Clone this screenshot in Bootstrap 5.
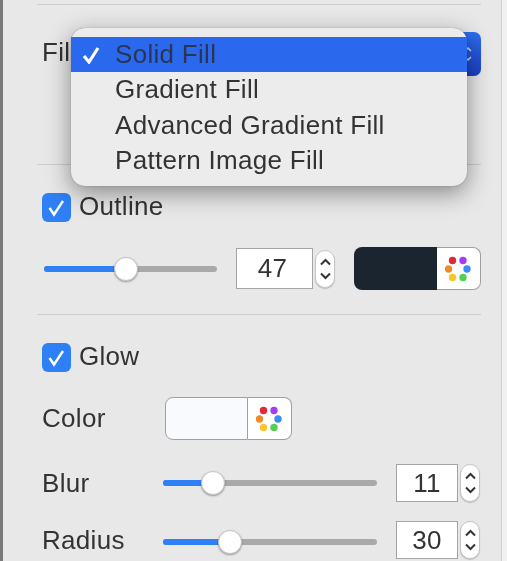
<!DOCTYPE html>
<html lang="en">
<head>
<meta charset="UTF-8">
<meta name="viewport" content="width=device-width, initial-scale=1.0">
<title>Fill and outline</title>
<link href="https://cdn.jsdelivr.net/npm/bootstrap@5.3.3/dist/css/bootstrap.min.css" rel="stylesheet">
<style>
html, body { height: 100%; overflow: hidden; background: #f1f1f1; }
body { font-family: "Liberation Sans", Arial, sans-serif; font-size: 26px; letter-spacing: .3px; color: #333; }
.panel-box { position: relative; width: 502px; height: 561px; padding: 4px 20px 0 37px; background: #e8e8e8; border-left: 3px solid #7a7a7a; border-right: 1px solid #cfcfcf; filter: blur(.6px); }
.rule { height: 1px; margin: 0 0 0 -3px; background: #cdcdcd; }
.fill-row { height: 44px; margin-top: 27px; margin-bottom: 88px; margin-left: 2px; }
.fill-label { position: relative; top: -2px; }
.fill-btn { display: flex; flex-direction: column; align-items: flex-end; justify-content: center; gap: 4px; height: 44px; flex: 1; padding: 0 9px 0 0; border: 0; border-radius: 7px; background: linear-gradient(#2f6ef0, #1b3fc4); }
.check-row { height: 29px; margin-top: 28px; margin-left: 2px; }
.check-row .form-check-input { width: 29px; height: 29px; margin: 0; border: 0; border-radius: 6px; background-color: #2f7ff6; }
.check-row .form-check-input:checked[type=checkbox] { --bs-form-check-bg-image: url("data:image/svg+xml,%3Csvg xmlns='http://www.w3.org/2000/svg' viewBox='0 0 29 29'%3E%3Cpath d='M7.500 15l4.500 6.500L21 8' fill='none' stroke='%23fff' stroke-width='2.400'/%3E%3C/svg%3E"); }
.check-row label { margin-left: 8px; line-height: 29px; position: relative; top: -1px; }
.slider-row { height: 43px; margin-top: 25px; margin-left: 4px; }
.color-row { margin-left: 0; }
.blur-row { height: 38px; margin-top: 24px; }
.radius-row { height: 38px; margin-top: 19px; }
.track { position: relative; height: 6px; border-radius: 3px; background: #a9a9a9; }
.track-fill { height: 6px; border-radius: 3px 0 0 3px; background: #2f7ff6; }
.knob { position: absolute; top: -9px; width: 24px; height: 24px; margin-left: -12px; border-radius: 50%; background: #fff; border: 1px solid #c4c4c4; box-shadow: 0 1px 2px rgba(0,0,0,.35); }
.track-a { width: 173px; margin-right: 19px; }
.track-b { width: 214px; margin-right: 19px; }
.num { width: 77px; height: 41px; padding: 0 4px 0 0; border: 1px solid #a5a5a5; border-radius: 0; text-align: center; font-size: 26px; letter-spacing: .3px; color: #333; background: #fff; }
.num-sm { width: 62px; height: 38px; padding: 0; }
.stepper { display: flex; flex-direction: column; justify-content: center; align-items: center; gap: 6px; width: 20px; height: 38px; margin-left: 2px; border-radius: 10px; background: #fff; border: 1px solid #c6c6c6; box-shadow: 0 1px 1px rgba(0,0,0,.2); }
.well { display: flex; width: 127px; height: 43px; }
.swatch { width: 83px; flex: none; border-radius: 8px 0 0 8px; }
.swatch-dark { background: #1a2530; }
.swatch-light { background: #f9fafe; border: 1px solid #a0a0a0; }
.well-icon { flex: 1; display: flex; align-items: center; justify-content: center; padding-right: 2px; background: #fff; border: 1px solid #a0a0a0; border-left: 0; border-radius: 0 8px 8px 0; }
.side-label { width: 123px; flex: none; margin-left: 2px; }
.side-label-sm { width: 121px; }
.menu-over { display: block; top: 28px; left: 68px; width: 396px; min-width: 0; padding: 9px 0 7px; border: 0; border-radius: 14px; background: #ececec; font-size: 26px; box-shadow: 0 7px 24px rgba(0,0,0,.42), 0 0 1px rgba(0,0,0,.5); }
.menu-over .dropdown-item { position: relative; height: 35.500px; padding: 0 0 0 44px; line-height: 35px; color: #333; }
.menu-over .dropdown-item.active { height: 35px; background: #2a69ee; color: #2b3552; }
.tick { position: absolute; left: 11px; top: 9px; }
</style>
</head>
<body>
<div class="panel-box">
  <div class="rule"></div>

  <div class="fill-row d-flex align-items-center">
    <span class="fill-label me-2">Fill</span>
    <button type="button" class="btn fill-btn" aria-label="Fill type">
      <svg width="8" height="6" viewBox="0 0 8 6"><path d="M1 5 4 2l3 3" fill="none" stroke="#cfdcff" stroke-width="1.500"/></svg>
      <svg width="8" height="6" viewBox="0 0 8 6"><path d="M1 1l3 3 3-3" fill="none" stroke="#cfdcff" stroke-width="1.500"/></svg>
    </button>
  </div>
  <div class="rule"></div>

  <div class="check-row d-flex align-items-center">
    <input class="form-check-input" type="checkbox" id="outline" checked>
    <label for="outline">Outline</label>
  </div>
  <div class="slider-row d-flex align-items-center">
    <div class="track track-a">
      <div class="track-fill" style="width:47.500%"></div>
      <div class="knob" style="left:47.500%"></div>
    </div>
    <input class="form-control num" value="47">
    <div class="stepper">
      <svg width="13" height="8" viewBox="0 0 13 8"><path d="M2 6.500 6.500 2 11 6.500" fill="none" stroke="#333" stroke-width="2"/></svg>
      <svg width="13" height="8" viewBox="0 0 13 8"><path d="M2 1.500 6.500 6 11 1.500" fill="none" stroke="#333" stroke-width="2"/></svg>
    </div>
    <div class="well ms-auto">
      <div class="swatch swatch-dark"></div>
      <div class="well-icon">
        <svg width="26" height="26" viewBox="0 0 26 26"><circle cx="7.500" cy="4.500" r="3.700" fill="#e0283a"/><circle cx="18" cy="4.500" r="3.700" fill="#a43df0"/><circle cx="22" cy="13" r="3.700" fill="#3a8cf5"/><circle cx="18" cy="21.500" r="3.700" fill="#55cf50"/><circle cx="7.500" cy="21.500" r="3.700" fill="#fcc52e"/><circle cx="3.500" cy="13" r="3.700" fill="#f08a28"/></svg>
      </div>
    </div>
  </div>
  <div class="rule mt-4"></div>

  <div class="check-row d-flex align-items-center">
    <input class="form-check-input" type="checkbox" id="glow" checked>
    <label for="glow">Glow</label>
  </div>
  <div class="d-flex align-items-center slider-row color-row">
    <span class="side-label">Color</span>
    <div class="well">
      <div class="swatch swatch-light"></div>
      <div class="well-icon">
        <svg width="26" height="26" viewBox="0 0 26 26"><circle cx="7.500" cy="4.500" r="3.700" fill="#e0283a"/><circle cx="18" cy="4.500" r="3.700" fill="#a43df0"/><circle cx="22" cy="13" r="3.700" fill="#3a8cf5"/><circle cx="18" cy="21.500" r="3.700" fill="#55cf50"/><circle cx="7.500" cy="21.500" r="3.700" fill="#fcc52e"/><circle cx="3.500" cy="13" r="3.700" fill="#f08a28"/></svg>
      </div>
    </div>
  </div>
  <div class="d-flex align-items-center blur-row">
    <span class="side-label side-label-sm">Blur</span>
    <div class="track track-b">
      <div class="track-fill" style="width:23.500%"></div>
      <div class="knob" style="left:23.500%"></div>
    </div>
    <input class="form-control num num-sm" value="11">
    <div class="stepper">
      <svg width="13" height="8" viewBox="0 0 13 8"><path d="M2 6.500 6.500 2 11 6.500" fill="none" stroke="#333" stroke-width="2"/></svg>
      <svg width="13" height="8" viewBox="0 0 13 8"><path d="M2 1.500 6.500 6 11 1.500" fill="none" stroke="#333" stroke-width="2"/></svg>
    </div>
  </div>
  <div class="d-flex align-items-center radius-row">
    <span class="side-label side-label-sm">Radius</span>
    <div class="track track-b mt-1">
      <div class="track-fill" style="width:31.500%"></div>
      <div class="knob" style="left:31.500%"></div>
    </div>
    <input class="form-control num num-sm" value="30">
    <div class="stepper">
      <svg width="13" height="8" viewBox="0 0 13 8"><path d="M2 6.500 6.500 2 11 6.500" fill="none" stroke="#333" stroke-width="2"/></svg>
      <svg width="13" height="8" viewBox="0 0 13 8"><path d="M2 1.500 6.500 6 11 1.500" fill="none" stroke="#333" stroke-width="2"/></svg>
    </div>
  </div>

  <ul class="dropdown-menu menu-over list-unstyled m-0">
    <li><a class="dropdown-item active" href="#">
      <svg class="tick" width="18" height="18" viewBox="0 0 18 18"><path d="M2 10l5 6L16 2" fill="none" stroke="#fff" stroke-width="3.200"/></svg>Solid Fill</a></li>
    <li><a class="dropdown-item" href="#">Gradient Fill</a></li>
    <li><a class="dropdown-item" href="#">Advanced Gradient Fill</a></li>
    <li><a class="dropdown-item" href="#">Pattern Image Fill</a></li>
  </ul>
</div>

<script src="https://cdn.jsdelivr.net/npm/bootstrap@5.3.3/dist/js/bootstrap.bundle.min.js"></script>
</body>
</html>
